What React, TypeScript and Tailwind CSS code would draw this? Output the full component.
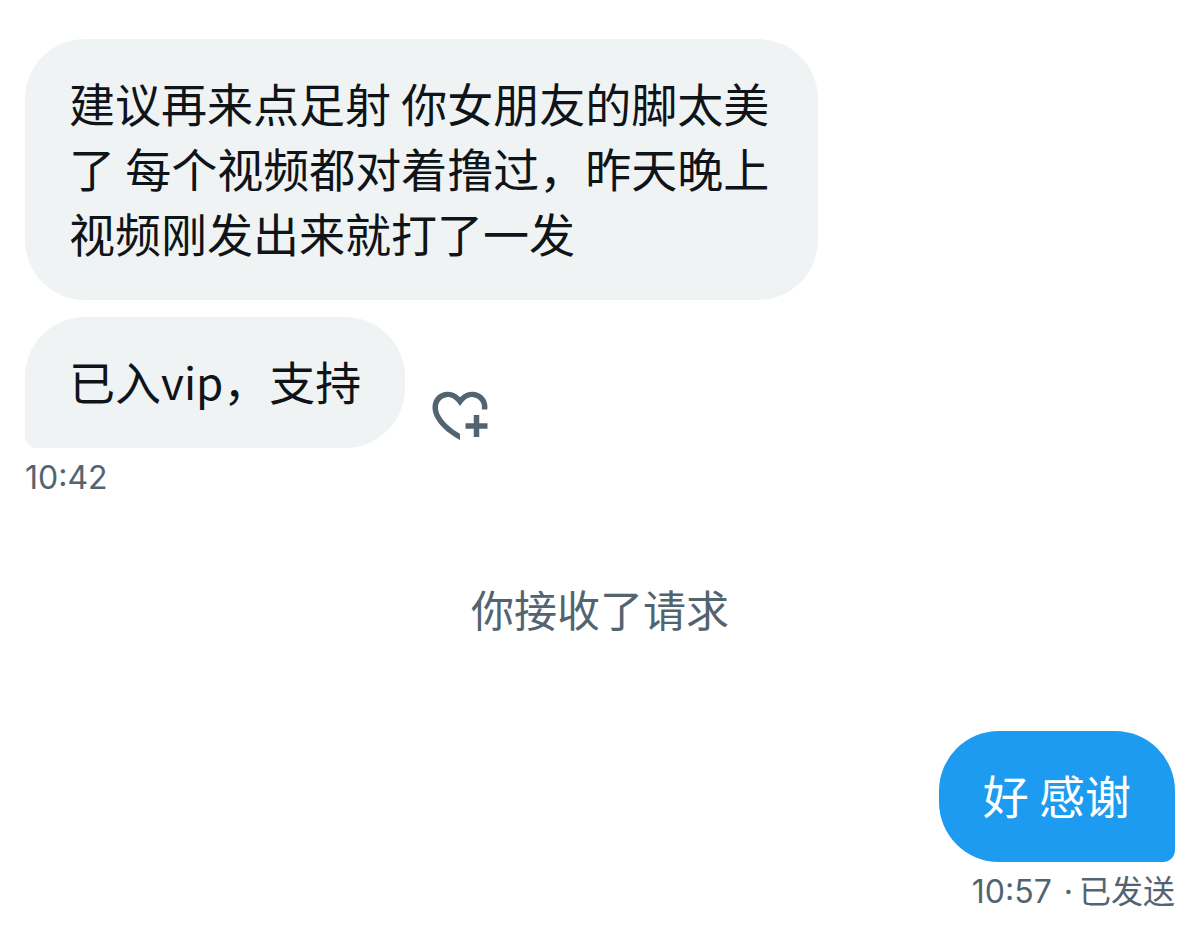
import type { ReactNode } from "react";

function Bubble({ children, className }: { children: ReactNode; className: string }) {
  return (
    <p className={`w-fit px-11 pt-[31px] pb-[35px] text-[46px] leading-[65px] ${className}`}>{children}</p>
  );
}

function HeartPlusIcon() {
  return (
    <svg viewBox="0 0 24 24" className="size-[66px] fill-current" aria-hidden="true">
      <path d="M17 12v3h-2.998v2h3v3h2v-3h3v-2h-3.001v-3H17zm-5 6.839c-3.871-2.34-6.053-4.639-7.127-6.609-1.112-2.04-1.031-3.7-.479-4.82.561-1.13 1.667-1.84 2.91-1.91 1.222-.06 2.68.51 3.892 2.16l.806 1.09.805-1.09c1.211-1.65 2.668-2.22 3.89-2.16 1.242.07 2.347.78 2.908 1.91.334.677.49 1.554.321 2.59h2.011c.153-1.283-.039-2.469-.539-3.48-.887-1.79-2.647-2.91-4.601-3.01-1.65-.09-3.367.56-4.796 2.01-1.43-1.45-3.147-2.1-4.798-2.01-1.954.1-3.714 1.22-4.601 3.01-.896 1.81-.846 4.17.514 6.67 1.353 2.48 4.003 5.12 8.382 7.67l.502.299v-2.32z" />
    </svg>
  );
}

export default function App() {
  return (
    <main
      lang="zh-CN"
      className="flex min-h-screen flex-col bg-white px-[25px] pt-[39px] font-['Noto_Sans_CJK_SC',sans-serif] text-[#0f1419]"
    >
      <section className="flex flex-col items-start">
        <Bubble className="max-w-[793px] rounded-[60px] bg-[#eff3f4]">
          建议再来点足射 你女朋友的脚太美了 每个视频都对着撸过，昨天晚上视频刚发出来就打了一发
        </Bubble>
        <div className="mt-[17px] flex items-end gap-[22px]">
          <Bubble className="rounded-[60px] rounded-bl-[12px] bg-[#eff3f4]">
            已入<span className="text-[44px] leading-none">vip</span>，支持
          </Bubble>
          <button type="button" aria-label="添加回应" className="text-[#536471]">
            <HeartPlusIcon />
          </button>
        </div>
        <time className="mt-2.5 font-[Inter,sans-serif] text-[32px] leading-10 text-[#536471]">10:42</time>
      </section>

      <p className="mt-[78px] text-center text-[43px] leading-[65px] text-[#536471]">你接收了请求</p>

      <section className="mt-[90px] flex flex-col items-end">
        <Bubble className="rounded-[60px] rounded-br-[12px] bg-[#1d9bf0] text-white">好 感谢</Bubble>
        <p className="mt-2.5 flex gap-3 font-[Inter,'Noto_Sans_CJK_SC',sans-serif] text-[32px] leading-10 text-[#536471]">
          <time>10:57</time>
          <span className="flex gap-1.5">
            <span>·</span>
            <span>已发送</span>
          </span>
        </p>
      </section>
    </main>
  );
}
